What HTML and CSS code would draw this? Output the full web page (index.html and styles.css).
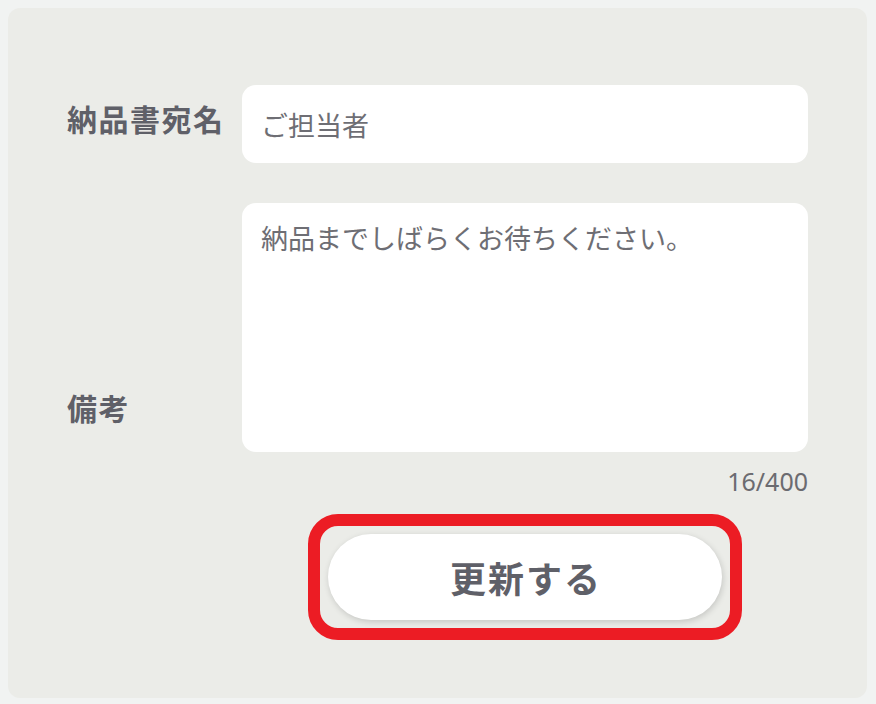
FILE: index.html
```html
<!DOCTYPE html>
<html lang="ja">
<head>
<meta charset="utf-8">
<title>納品書設定</title>
<link rel="stylesheet" href="styles.css">
</head>
<body>
  <div class="card">
    <form class="form">
      <label class="label label-name" for="name">納品書宛名</label>
      <input class="field field-input" id="name" type="text" placeholder="ご担当者">
      <label class="label label-note" for="note">備考</label>
      <textarea class="field field-area" id="note">納品までしばらくお待ちください。</textarea>
      <div class="counter">16/400</div>
      <div class="actions">
        <span class="highlight">
          <button class="submit" type="button">更新する</button>
        </span>
      </div>
    </form>
  </div>
</body>
</html>
```
FILE: styles.css
```css
* {
  box-sizing: border-box;
}

html, body {
  margin: 0;
  padding: 0;
}

body {
  background: #f1f3f2;
  padding: 8px;
  font-family: "Noto Sans CJK JP", "Noto Sans", sans-serif;
}

.card {
  width: 859px;
  height: 690px;
  background: #ebece8;
  border-radius: 12px;
  padding: 77px 59px 58px 59px;
}

.form {
  display: grid;
  grid-template-columns: 175px 566px;
  margin: 0;
}

.label {
  font-size: 30px;
  font-weight: 700;
  line-height: 40px;
  color: #5f6068;
  letter-spacing: 1.5px;
}

.label-name {
  align-self: start;
  margin-top: 13px;
}

.label-note {
  align-self: end;
  margin-bottom: 25px;
  margin-top: 40px;
}

.field {
  display: block;
  width: 566px;
  border: none;
  outline: none;
  background: #ffffff;
  border-radius: 14px;
  font-family: "Noto Sans CJK JP", "Noto Sans", sans-serif;
  font-size: 27px;
  color: #6e6e74;
}

.field-input {
  height: 78px;
  padding: 0 19px;
}

.field-input::placeholder {
  color: #6e6e74;
  opacity: 1;
}

.field-area {
  height: 249px;
  margin-top: 40px;
  padding: 15px 19px;
  line-height: 1.5;
  resize: none;
}

.counter {
  grid-column: 2;
  margin-top: 14px;
  text-align: right;
  font-family: "Noto Sans", "Noto Sans CJK JP", sans-serif;
  font-size: 25px;
  line-height: 30px;
  color: #6b6b70;
}

.actions {
  grid-column: 2;
  display: flex;
  justify-content: center;
  margin-top: 18px;
}

.highlight {
  display: block;
  border: 12px solid #ec1c24;
  border-radius: 30px;
  padding: 8px;
}

.submit {
  display: block;
  width: 394px;
  height: 86px;
  border: none;
  border-radius: 43px;
  background: #ffffff;
  box-shadow: 1px 2px 6px rgba(0, 0, 0, 0.16);
  font-family: "Noto Sans CJK JP", "Noto Sans", sans-serif;
  font-size: 36px;
  font-weight: 700;
  color: #5f6068;
  letter-spacing: 2px;
  text-indent: 2px;
  cursor: pointer;
}
```
